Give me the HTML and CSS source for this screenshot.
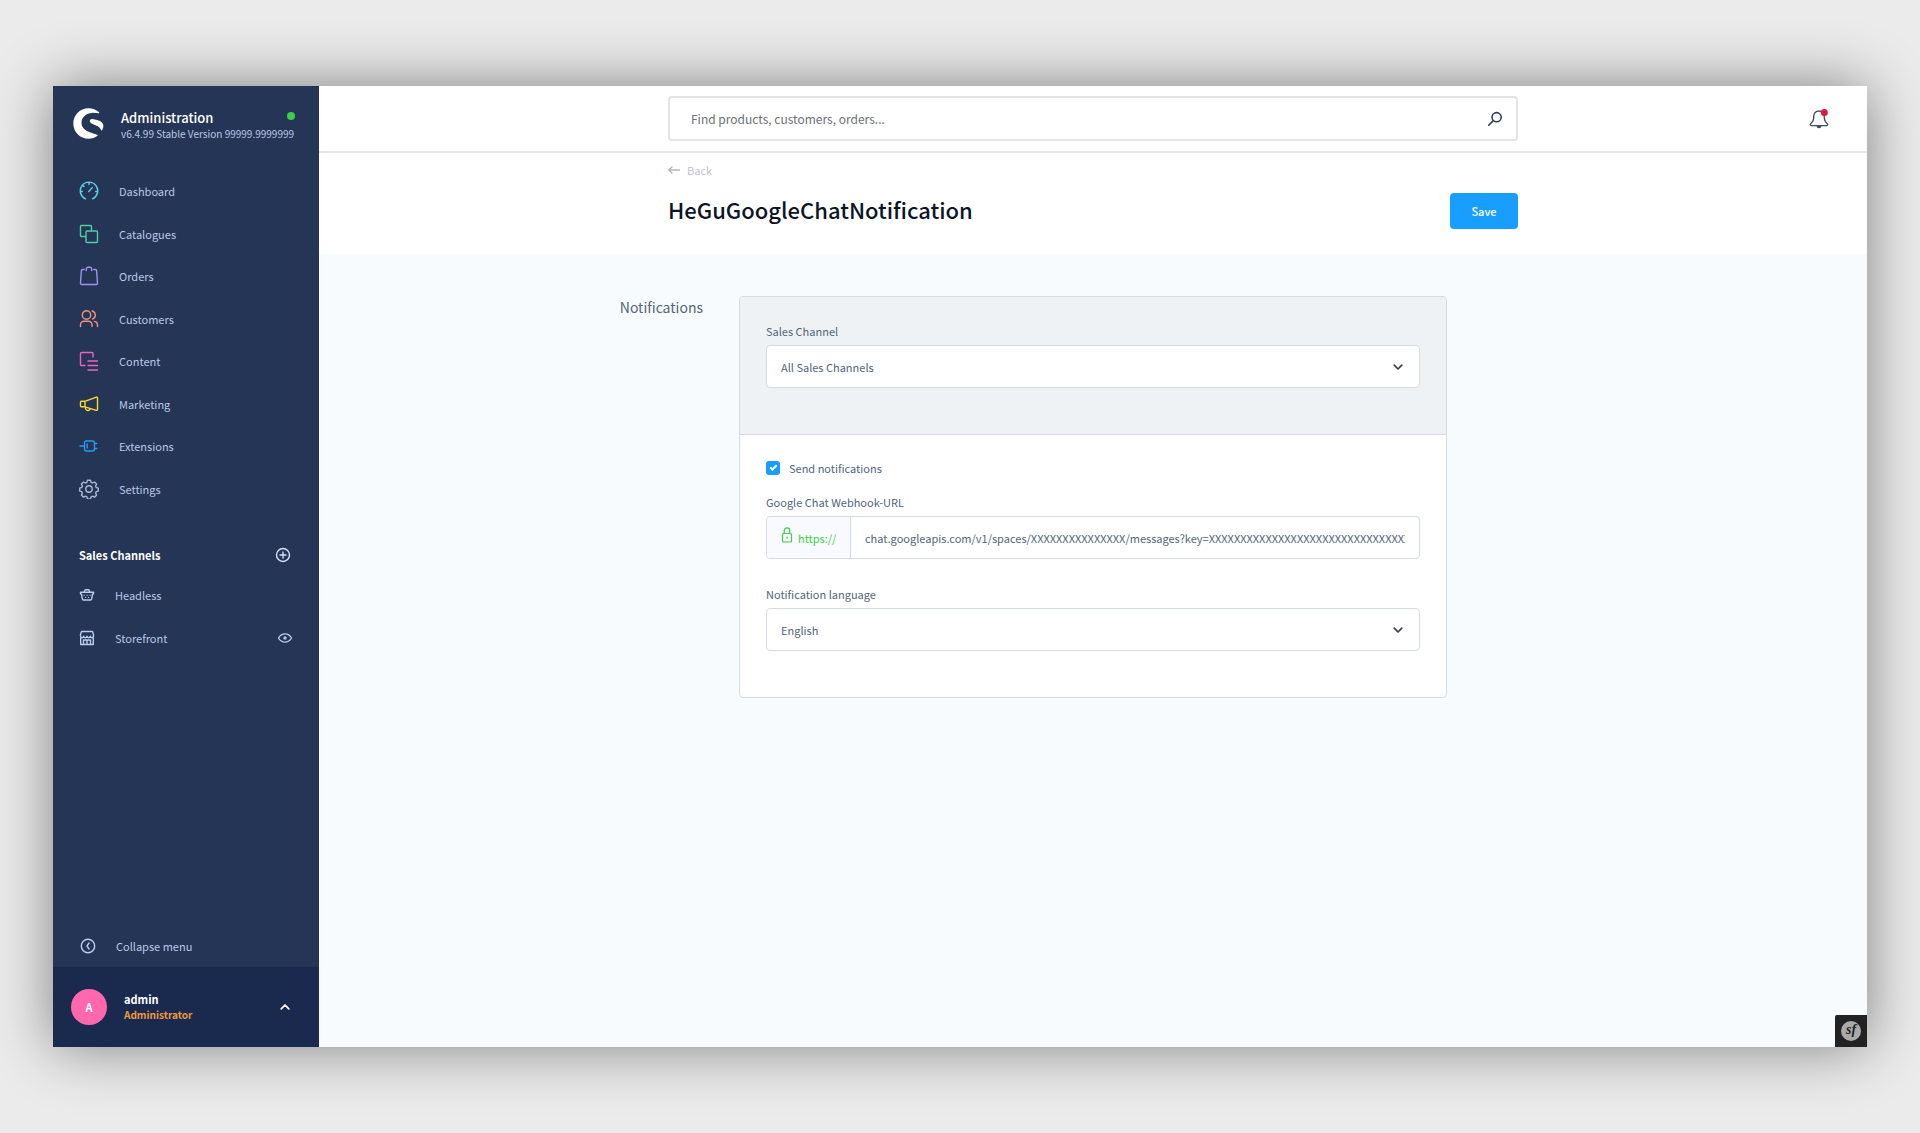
FILE: index.html
```html
<!DOCTYPE html>
<html lang="en">
<head>
<meta charset="utf-8">
<title>HeGuGoogleChatNotification | Administration</title>
<meta name="viewport" content="width=device-width, initial-scale=1">
<link rel="stylesheet" href="styles.css">
</head>
<body>
<div class="window">
  <aside class="sidebar">
    <header class="brand">
      <svg class="brand-logo" viewBox="0 0 31 31" aria-hidden="true"><path fill="#fff" d="M26 4.200C23 1.500 19.500 0.300 15.500 0.300 7 0.300 0.300 7 0.300 15.500S7 30.700 15.500 30.700c3.400 0 6.500-1.100 9-2.900.4-.3.300-.7-.1-.9-1.700-.9-4.600-1.500-7.600-2.700C12.300 22.400 8.500 19.900 8.500 14.700 8.500 8.700 14 4.700 20.500 4.700c1.800 0 3.500.2 5 .5.600.1.900-.6.500-1z"/><path fill="#fff" d="M30.400 17.300c-.3-1.300-1-2.400-2-3.200-2.400-1.900-6-2.700-8.900-3.100-1.600-.2-2.700.7-2.700 2.100 0 2.100 2.700 3 5.600 4.100 2.700 1 4.700 2 5.500 4.600.2.700.9.800 1.300.1.800-1.400 1.300-3.200 1.200-4.600z"/></svg>
      <div class="brand-text">
        <strong class="brand-name">Administration</strong>
        <span class="brand-version">v6.4.99 Stable Version 99999.9999999</span>
      </div>
      <span class="status-dot" role="img" aria-label="Online"></span>
    </header>

    <nav class="menu" aria-label="Main">
      <a class="menu-item" href="#dashboard"><svg class="icon icon-cyan" viewBox="0 0 20 20" aria-hidden="true"><path d="M6.500 17.800A8.700 8.700 0 1 1 13.500 17.800M10 1.500v2M1.500 10.500h1.800M16.700 10.500h1.800M4 4.500l1 1M9.800 10.500l3.400-3.900"/></svg>Dashboard</a>
      <a class="menu-item" href="#catalogues"><svg class="icon icon-green" viewBox="0 0 20 20" aria-hidden="true"><path d="M6.500 12.500H2.500a1 1 0 0 1-1-1v-9a1 1 0 0 1 1-1h9a1 1 0 0 1 1 1v4"/><rect x="7" y="7" width="11.500" height="11.500" rx="1"/></svg>Catalogues</a>
      <a class="menu-item" href="#orders"><svg class="icon icon-purple" viewBox="0 0 20 20" aria-hidden="true"><path d="M5.300 3.500H3.400a1 1 0 0 0-1 .9l-.9 12.900a1.100 1.100 0 0 0 1.100 1.200h14.800a1.100 1.100 0 0 0 1.100-1.200l-.9-12.900a1 1 0 0 0-1-.9h-1.900M7.300 4.500V3a1.700 1.700 0 0 1 1.700-1.700h2A1.700 1.700 0 0 1 12.700 3v1.500"/></svg>Orders</a>
      <a class="menu-item" href="#customers"><svg class="icon icon-orange" viewBox="0 0 20 20" aria-hidden="true"><circle cx="7.500" cy="6" r="4.200"/><path d="M1.500 17.500v-1.700a3.500 3.500 0 0 1 3.500-3.500h4.500a3.500 3.500 0 0 1 3.500 3.500v1.700M13 2a4.200 4.200 0 0 1 .6 8M15.500 12.400a3.600 3.600 0 0 1 3 3.600v1.500"/></svg>Customers</a>
      <a class="menu-item" href="#content"><svg class="icon icon-pink" viewBox="0 0 20 20" aria-hidden="true"><path d="M6 14.500H2.500a1 1 0 0 1-1-1v-11a1 1 0 0 1 1-1h10.500a1 1 0 0 1 1 1V6M9 10h9.500M9 14.500h9.500M9 19h9.500"/></svg>Content</a>
      <a class="menu-item" href="#marketing"><svg class="icon icon-yellow" viewBox="0 0 20 20" aria-hidden="true"><path d="M2.300 7.300H6l11.300-4.200a.9.900 0 0 1 1.200.9v11.500a.9.900 0 0 1-1.200.8L6 12.800H2.300a.9.900 0 0 1-.8-.9V8.200a.9.900 0 0 1 .8-.9zM6 7.300v5.500M6.500 13v1.500a2.400 2.400 0 0 0 4.600.6"/></svg>Marketing</a>
      <a class="menu-item" href="#extensions"><svg class="icon icon-blue" viewBox="0 0 20 20" aria-hidden="true"><path d="M1 10h4.500M15.500 7.500h2.200M15.500 12.500h2.200M8.200 8v4"/><rect x="5.500" y="5" width="10" height="10" rx="2"/></svg>Extensions</a>
      <a class="menu-item" href="#settings"><svg class="icon icon-grey" viewBox="0 0 20 20" aria-hidden="true"><circle cx="10" cy="10" r="3.200"/><path d="M8.500 1.300h3l.6 2.100 1.500.6 1.900-1 2.100 2.100-1 1.900.6 1.500 2.100.6v3l-2.100.6-.6 1.500 1 1.900-2.100 2.100-1.900-1-1.500.6-.6 2.100h-3l-.6-2.100-1.500-.6-1.900 1-2.100-2.100 1-1.900-.6-1.500-2.100-.6v-3l2.100-.6.600-1.500-1-1.900 2.100-2.100 1.900 1 1.500-.6z"/></svg>Settings</a>
    </nav>

    <section class="channels" aria-labelledby="channels-title">
      <div class="channels-head">
        <h2 class="channels-title" id="channels-title">Sales Channels</h2>
        <button class="icon-button" type="button" aria-label="Add sales channel"><svg class="icon-small" viewBox="0 0 16 16" aria-hidden="true"><circle cx="8" cy="8" r="6.500"/><path d="M8 5v6M5 8h6"/></svg></button>
      </div>
      <div class="channel-list">
        <div class="channel"><a class="channel-link" href="#headless"><svg class="icon-small icon-pale" viewBox="0 0 16 16" aria-hidden="true"><path d="M1.500 5.200h13v1.600l-1 .4-.8 4.800a1.200 1.200 0 0 1-1.200 1h-7a1.200 1.200 0 0 1-1.200-1l-.8-4.800-1-.4zM5 5l1.200-2.200h3.600L11 5"/><path class="weave" d="M5 8.200h.1M8 8.200h.1M11 8.200h.1M6.500 10.300h.1M9.500 10.300h.1"/></svg>Headless</a></div>
        <div class="channel"><a class="channel-link" href="#storefront"><svg class="icon-small icon-pale" viewBox="0 0 16 16" aria-hidden="true"><path d="M2.500 1.500h11l1 3v1.600a1.600 1.600 0 0 1-3.200 0 1.600 1.600 0 0 1-3.300 0 1.600 1.600 0 0 1-3.300 0 1.600 1.600 0 0 1-3.200 0V4.500zM1.700 7.500v7h12.600v-7M4.500 14.500V10h7v4.500M8 10v4.500"/></svg>Storefront</a>
          <button class="icon-button icon-pale" type="button" aria-label="Open storefront"><svg class="icon-small" viewBox="0 0 16 16" aria-hidden="true"><path d="M1.500 8C3 5.400 5.300 3.900 8 3.900S13 5.400 14.500 8C13 10.600 10.700 12.100 8 12.100S3 10.600 1.500 8z"/><circle cx="8" cy="8" r="1"/></svg></button></div>
      </div>
    </section>

    <button class="collapse" type="button"><svg class="icon-small icon-pale" viewBox="0 0 16 16" aria-hidden="true"><circle cx="8" cy="8" r="6.700"/><path d="M9 5L7 8l2 3"/></svg>Collapse menu</button>

    <button class="user" type="button">
      <span class="avatar">A</span>
      <span class="user-text"><span class="user-name">admin</span><span class="user-role">Administrator</span></span>
      <svg class="chevron-up" viewBox="0 0 12 12" aria-hidden="true"><path d="M2.200 7.800L6 4l3.800 3.800"/></svg>
    </button>
  </aside>

  <main class="main">
    <div class="topbar">
      <form class="search" role="search">
        <input class="search-input" type="search" aria-label="Search" placeholder="Find products, customers, orders...">
        <button class="search-button" type="submit" aria-label="Search"><svg class="search-icon" viewBox="0 0 16 16" aria-hidden="true"><circle cx="9.600" cy="6.200" r="4.600"/><path d="M6.200 9.600L1.700 14.200"/></svg></button>
      </form>
      <button class="bell" type="button" aria-label="Notifications"><svg class="bell-icon" viewBox="0 0 20 20" aria-hidden="true"><path class="bell-line" d="M10 2C6.700 2 4.800 4.400 4.800 7.300c0 4.300-1.200 5.900-2.900 7.200-1 .8-.7 2.100.5 2.100h15.200c1.200 0 1.500-1.300.5-2.100-1.700-1.300-2.900-2.900-2.900-7.200C15.200 4.400 13.300 2 10 2z"/><path class="bell-clapper" d="M7.500 17h5a2.500 2.200 0 0 1-5 0z"/><circle class="bell-dot" cx="15.300" cy="3.600" r="3.500"/></svg></button>
    </div>

    <header class="page-head">
      <div class="page-head-inner">
        <a class="back" href="#back"><svg class="back-icon" viewBox="0 0 12 12" aria-hidden="true"><path d="M4 3L.800 6 4 9M1 6h11"/></svg>Back</a>
        <div class="title-row">
          <h1 class="title">HeGuGoogleChatNotification</h1>
          <button class="save" type="submit" form="config">Save</button>
        </div>
      </div>
    </header>

    <div class="content">
      <h2 class="section-title">Notifications</h2>
      <form class="card" id="config">
        <div class="card-top">
          <label class="label" for="channel">Sales Channel</label>
          <div class="select-wrap">
            <select class="control" id="channel"><option>All Sales Channels</option></select>
            <svg class="chevron-down" viewBox="0 0 12 12" aria-hidden="true"><path d="M2.200 4.200L6 8l3.800-3.800"/></svg>
          </div>
        </div>
        <div class="card-body">
          <div class="check">
            <input class="checkbox" type="checkbox" id="send" checked>
            <label class="check-label" for="send">Send notifications</label>
          </div>
          <label class="label" for="webhook">Google Chat Webhook-URL</label>
          <div class="url-field">
            <span class="prefix"><svg class="lock" viewBox="0 0 12 16" aria-hidden="true"><rect x="1.500" y="6.500" width="9" height="8.500" rx="1"/><path d="M3.200 6.500V3.700a2.800 2.800 0 0 1 5.600 0v2.800M6 10v1.200"/></svg>https://</span>
            <input class="url-input" id="webhook" type="text" value="chat.googleapis.com/v1/spaces/XXXXXXXXXXXXXXX/messages?key=XXXXXXXXXXXXXXXXXXXXXXXXXXXXXXXXXXXXXXXX">
          </div>
          <label class="label" for="language">Notification language</label>
          <div class="select-wrap">
            <select class="control" id="language"><option>English</option></select>
            <svg class="chevron-down" viewBox="0 0 12 12" aria-hidden="true"><path d="M2.200 4.200L6 8l3.800-3.800"/></svg>
          </div>
        </div>
      </form>
    </div>
  </main>
  <button class="debug" type="button" aria-label="Open debug toolbar"><span class="debug-logo">sf</span></button>
</div>
</body>
</html>
```
FILE: styles.css
```css
*,
*::before,
*::after {
  box-sizing: border-box;
}

body {
  margin: 0;
  padding: 86px 53px;
  min-height: 100vh;
  background: #ebebeb;
  color: #52667a;
  font-family: "Noto Sans CJK SC", "Noto Sans", sans-serif;
  font-size: 11px;
  line-height: 16px;
}

button,
input,
select {
  margin: 0;
  padding: 0;
  border: 0;
  background: none;
  color: inherit;
  font: inherit;
}

button {
  cursor: pointer;
}

h1,
h2 {
  margin: 0;
}

a {
  color: inherit;
  text-decoration: none;
}

svg {
  display: block;
  flex: none;
  fill: none;
  stroke: currentColor;
  stroke-linecap: round;
  stroke-linejoin: round;
}

.window {
  position: relative;
  display: flex;
  min-height: calc(100vh - 172px);
  box-shadow: 0 0 56px rgba(0, 0, 0, 0.46);
}

/* Sidebar */

.sidebar {
  display: flex;
  flex: none;
  flex-direction: column;
  width: 266px;
  background: #253556;
  color: #b9c8e6;
}

.brand {
  display: flex;
  align-items: flex-start;
  padding: 22px 24px 0 20px;
  height: 84px;
}

.brand-logo {
  width: 31px;
  height: 31px;
  stroke: none;
}

.brand-text {
  display: flex;
  flex: 1;
  flex-direction: column;
  min-width: 0;
  margin-left: 17px;
  white-space: nowrap;
}

.brand-name {
  color: #fff;
  font-size: 13px;
  font-weight: 500;
  line-height: 20px;
}

.brand-version {
  font-size: 10px;
  line-height: 11px;
}

.status-dot {
  width: 8px;
  height: 8px;
  margin-top: 4px;
  border-radius: 50%;
  background: #37d046;
}

.menu {
  display: grid;
  grid-auto-rows: 1fr;
  height: 340px;
}

.menu-item {
  display: flex;
  align-items: center;
  gap: 20px;
  padding-left: 26px;
}

.icon {
  width: 20px;
  height: 20px;
  stroke-width: 1.4;
}

.icon-cyan { color: #5ed0e8; }
.icon-green { color: #4fd0a0; }
.icon-purple { color: #a092ee; }
.icon-orange { color: #f0937c; }
.icon-pink { color: #ea64c3; }
.icon-yellow { color: #ffd92e; }
.icon-blue { color: #2b9af0; }
.icon-grey { color: #a9b8d0; }
.icon-pale { color: #b9cdf0; }

.channels {
  padding: 34px 26px 0;
}

.channels-head,
.channel {
  display: flex;
  align-items: center;
  justify-content: space-between;
}

.channels-head {
  height: 22px;
  padding-right: 2px;
  color: #d5e0f5;
}

.channels-title {
  color: #fff;
  font-size: 11px;
  font-weight: 600;
}

.icon-small {
  width: 16px;
  height: 16px;
  stroke-width: 1.4;
}

.weave {
  stroke-width: 1.2;
}

.channel-list {
  display: grid;
  grid-auto-rows: 1fr;
  height: 85px;
  margin-top: 8px;
}

.channel-link {
  display: flex;
  align-items: center;
  gap: 20px;
}

.collapse {
  display: flex;
  align-items: center;
  gap: 20px;
  height: 42px;
  margin-top: auto;
  padding-left: 27px;
}

.user {
  display: flex;
  align-items: center;
  height: 80px;
  padding: 0 28px 0 18px;
  background: #1a2a4e;
  text-align: left;
}

.avatar {
  width: 36px;
  height: 36px;
  border-radius: 50%;
  background: #ff68ac;
  color: #fff;
  font-weight: 600;
  line-height: 36px;
  text-align: center;
}

.user-text {
  display: flex;
  flex: 1;
  flex-direction: column;
  margin-left: 17px;
  font-weight: 600;
}

.user-name {
  color: #fff;
}

.user-role {
  color: #f0983a;
  font-size: 10px;
}

.chevron-up,
.chevron-down {
  width: 12px;
  height: 12px;
  stroke-width: 1.7;
}

.chevron-up {
  color: #fff;
}

/* Main column */

.main {
  flex: 1;
  min-width: 0;
  background: #f8fbfe;
}

.topbar {
  display: grid;
  grid-template-columns: 1fr minmax(0, 850px) 1fr;
  align-items: center;
  height: 67px;
  border-bottom: 2px solid #e6e7e9;
  background: #fff;
}

.search {
  display: flex;
  grid-column: 2;
  height: 45px;
  border: 2px solid #e3e4e6;
  border-radius: 4px;
}

.search-input {
  flex: 1;
  padding-left: 21px;
  outline: 0;
  appearance: none;
  font-size: 12px;
}

.search-input::placeholder {
  color: #6c6f75;
  opacity: 1;
}

.search-button {
  padding: 0 13px;
  color: #33404f;
}

.search-icon {
  width: 16px;
  height: 16px;
  stroke-width: 1.6;
}

.bell {
  justify-self: end;
  margin-right: 38px;
}

.bell-icon {
  width: 20px;
  height: 20px;
  color: #414f60;
  stroke-width: 1.4;
}

.bell-clapper {
  fill: currentColor;
  stroke: none;
}

.bell-dot {
  fill: #de1a40;
  stroke: none;
}

.page-head {
  height: 101px;
  background: #fff;
}

.page-head-inner {
  max-width: 850px;
  margin: 0 auto;
  padding-top: 9px;
}

.back {
  display: flex;
  align-items: center;
  gap: 7px;
  width: fit-content;
  color: #c0c3d0;
}

.back-icon {
  width: 12px;
  height: 12px;
  color: #b0b6c0;
  stroke-width: 1.4;
}

.title-row {
  display: flex;
  align-items: flex-start;
  justify-content: space-between;
  margin-top: 15px;
}

.title {
  color: #0d1426;
  font-size: 22px;
  font-weight: 500;
  line-height: 32px;
}

.save {
  width: 68px;
  height: 36px;
  border-radius: 4px;
  background: #189eff;
  color: #fff;
  font-weight: 500;
}

/* Configuration card */

.content {
  display: grid;
  grid-template-columns: 1fr minmax(0, 708px) 1fr;
  align-items: start;
  padding: 42px 0;
}

.section-title {
  justify-self: end;
  padding: 1px 36px 0 0;
  font-size: 14px;
  font-weight: 400;
  line-height: 20px;
}

.card {
  border: 1px solid #d5dbe2;
  border-radius: 4px;
  background: #fff;
}

.card-top {
  padding: 26px 26px 46px;
  border-bottom: 1px solid #d5dbe2;
  border-radius: 3px 3px 0 0;
  background: #eff2f5;
}

.card-body {
  padding: 25px 26px 46px;
}

.label {
  display: block;
  margin-bottom: 6px;
}

.select-wrap {
  display: grid;
  align-items: center;
}

.select-wrap > * {
  grid-area: 1 / 1;
}

.control {
  width: 100%;
  height: 43px;
  padding: 0 14px;
  border: 1px solid #d5dbe2;
  border-radius: 4px;
  background: #fff;
  appearance: none;
}

.chevron-down {
  justify-self: end;
  margin-right: 16px;
  color: #36404d;
  pointer-events: none;
}

.check {
  display: flex;
  align-items: center;
  gap: 9px;
  margin-bottom: 18px;
}

.checkbox {
  display: grid;
  place-items: center;
  width: 14px;
  height: 14px;
  border-radius: 3px;
  background: #189eff;
  appearance: none;
}

.checkbox:checked::before {
  content: "";
  width: 7px;
  height: 4px;
  margin-bottom: 2px;
  border: solid #fff;
  border-width: 0 0 2px 2px;
  rotate: -45deg;
}

.url-field {
  display: flex;
  height: 43px;
  margin-bottom: 27px;
  border: 1px solid #d5dbe2;
  border-radius: 4px;
}

.prefix {
  display: flex;
  align-items: center;
  gap: 5px;
  width: 84px;
  padding-left: 14px;
  border-right: 1px solid #d5dbe2;
  border-radius: 3px 0 0 3px;
  background: #f8fafd;
  color: #41cc4a;
}

.lock {
  width: 12px;
  height: 16px;
  margin-bottom: 6px;
  stroke-width: 1.2;
}

.url-input {
  flex: 1;
  min-width: 0;
  margin: 0 14px;
}

/* Debug toolbar toggle */

.debug {
  position: absolute;
  right: 0;
  bottom: 0;
  display: grid;
  place-items: center;
  width: 32px;
  height: 32px;
  border-radius: 2px 0 0;
  background: #222;
}

.debug-logo {
  width: 20px;
  height: 20px;
  border-radius: 50%;
  background: #aaa;
  color: #222;
  font: italic bold 14px/18px "Liberation Serif", serif;
  text-align: center;
}
```
